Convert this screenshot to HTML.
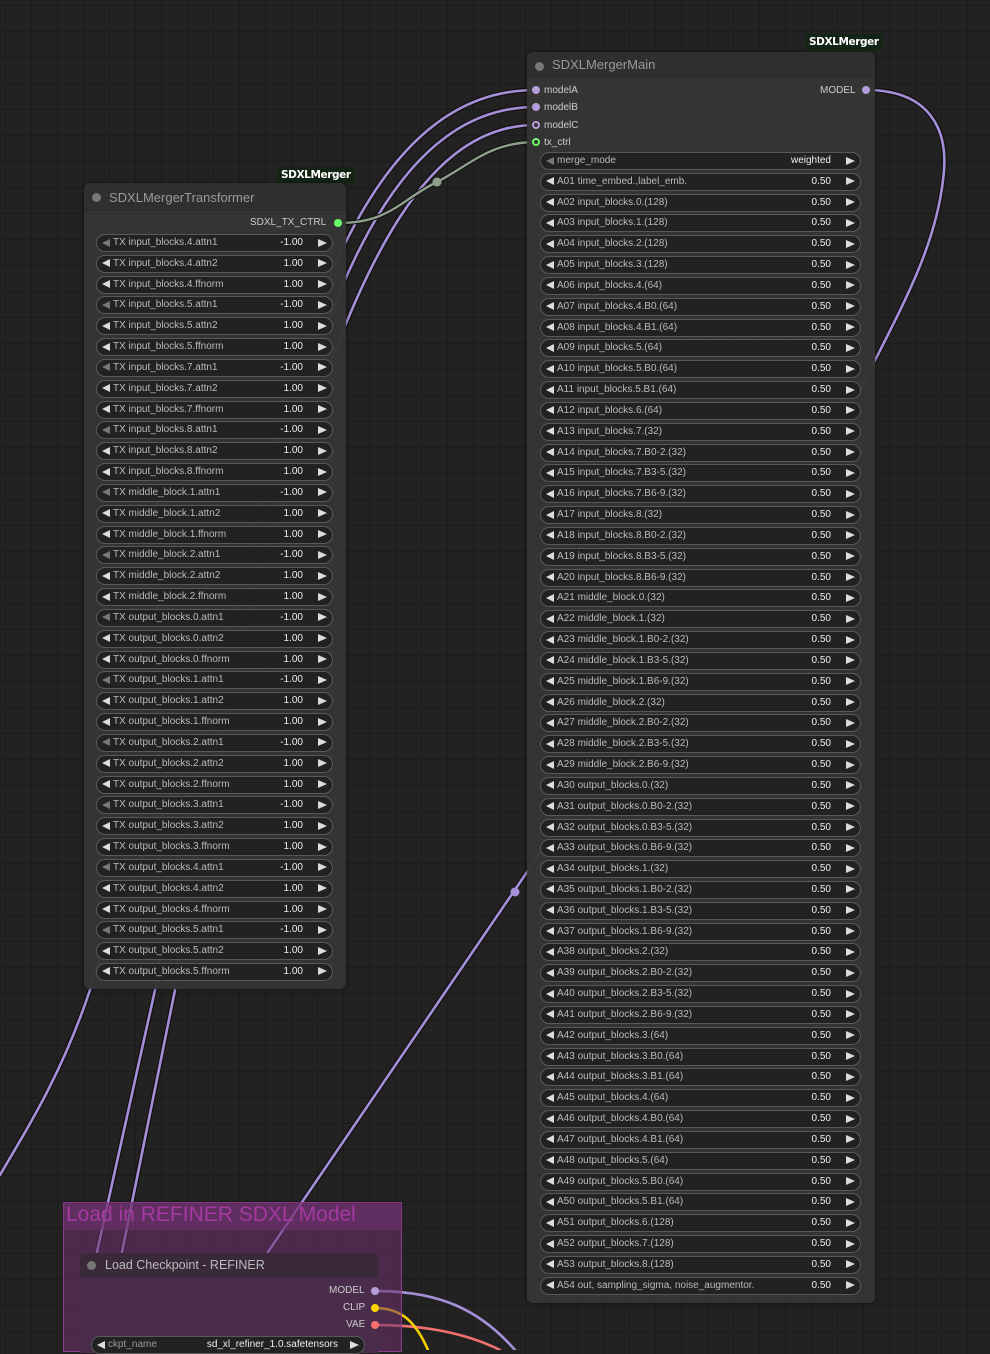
<!DOCTYPE html>
<html><head><meta charset="utf-8"><style>
*{box-sizing:border-box;margin:0;padding:0}
body{width:990px;height:1350px;overflow:hidden;position:relative;font-family:"Liberation Sans",Arial,sans-serif;
background-color:#222;
background-image:linear-gradient(#1b1b1b 1px,transparent 1px),linear-gradient(90deg,#1b1b1b 1px,transparent 1px);
background-size:26px 26px,26px 26px;background-position:0 5px,5px 0}
.abs{position:absolute}
.node{position:absolute;background:rgba(53,53,53,0.97);border-radius:6px;box-shadow:0 0 4px rgba(0,0,0,.5)}
.title{height:28px;background:#2f2f2f;border-radius:6px 6px 0 0;color:#9a9a9a;font-size:13px;line-height:29px;padding-left:25px;position:relative;border-bottom:1px solid #2a2a2a}
.title:before{content:"";position:absolute;left:8px;top:10px;width:9px;height:9px;border-radius:50%;background:#777}
.badge{position:absolute;background:#142414;color:#fff;font-weight:bold;font-size:10.5px;padding:2px 4px;border-radius:4px;font-family:"DejaVu Sans","Liberation Sans",sans-serif;letter-spacing:-0.4px}
.list{position:absolute;display:flex;flex-direction:column}
.w{height:18px;margin-bottom:2.83px;background:#222;border:1px solid #595959;border-radius:9px;position:relative;font-size:10px;color:#bbb;line-height:16px;padding-left:16px;white-space:nowrap}
.w:before{content:"";position:absolute;left:5px;top:3.5px;border-right:8px solid #ddd;border-top:4.5px solid transparent;border-bottom:4.5px solid transparent}
.w:after{content:"";position:absolute;right:5px;top:3.5px;border-left:9px solid #ddd;border-top:4.5px solid transparent;border-bottom:4.5px solid transparent}
.w.g:before{border-right-color:#777}
.w b{position:absolute;right:29px;font-weight:normal;color:#eee}
.sl{position:absolute;font-size:10px;color:#bbb}
.dot{position:absolute;width:8px;height:8px;border-radius:50%}
</style></head><body>
<svg class="abs" style="left:0;top:0" width="990" height="1350">
<g fill="none" stroke-linecap="round">
<g stroke="#111" stroke-width="5">
<path d="M536,90 C420,90 330,200 260,500 S165,900 155,990 L97,1252"/>
<path d="M536,107 C420,107 340,230 275,500 S182,900 175,990 L122,1252"/>
<path d="M536,125 C430,125 360,250 285,500 S110,900 90,990 C60,1080 20,1140 0,1175"/>
<path d="M268,1252 L540,853"/>
<path d="M866,90 C930,90 950,130 943,180 C935,250 900,310 860,390"/>
</g>
<g stroke="#a58fd8" stroke-width="2.6">
<path d="M536,90 C420,90 330,200 260,500 S165,900 155,990 L97,1252"/>
<path d="M536,107 C420,107 340,230 275,500 S182,900 175,990 L122,1252"/>
<path d="M536,125 C430,125 360,250 285,500 S110,900 90,990 C60,1080 20,1140 0,1175"/>
<path d="M268,1252 L540,853"/>
<path d="M866,90 C930,90 950,130 943,180 C935,250 900,310 860,390"/>
<path d="M375,1291 C440,1291 480,1310 515,1350"/>
</g>
<path d="M338,223 C390,223 400,200 437,182 C470,165 490,142 536,142" stroke="#111" stroke-width="4.5"/>
<path d="M338,223 C390,223 400,200 437,182 C470,165 490,142 536,142" stroke="#8e9f8c" stroke-width="2.4"/>
<path d="M375,1325 C430,1325 470,1335 500,1350" stroke="#f07070" stroke-width="2.6"/>
<path d="M375,1308 C400,1308 415,1320 428,1350" stroke="#f5d000" stroke-width="2.6"/>
</g>
<circle cx="437" cy="182" r="4.5" fill="#8e9f8c"/>
<circle cx="515" cy="892" r="4.5" fill="#a58fd8"/>
</svg>

<!-- group -->
<div class="abs" style="left:63px;top:1202px;width:339px;height:150px;background:rgba(110,50,110,0.55);border:1px solid #8a3e8a"></div>
<div class="abs" style="left:63px;top:1202px;width:339px;height:28px;background:rgba(120,50,120,0.5)"></div>
<div class="abs" style="left:66px;top:1201px;font-size:21px;color:#a43aa0;line-height:28px">Load in REFINER SDXL Model</div>
<div class="abs" style="left:80px;top:1253px;width:298px;height:100px;background:#4a2d4a;border-radius:6px 6px 0 0">
  <div style="height:25px;background:#392939;border-radius:6px 6px 0 0;color:#bbb;font-size:12.5px;line-height:25px;padding-left:25px;position:relative"><span style="position:absolute;left:7px;top:8px;width:9px;height:9px;border-radius:50%;background:#777"></span>Load Checkpoint - REFINER</div>
</div>
<div class="sl" style="left:329px;top:1285px;color:#ccc">MODEL</div>
<div class="sl" style="left:343px;top:1302px;color:#ccc">CLIP</div>
<div class="sl" style="left:346px;top:1319px;color:#ccc">VAE</div>
<div class="dot" style="left:371px;top:1287px;background:#b39ddb"></div>
<div class="dot" style="left:371px;top:1304px;background:#ffd500"></div>
<div class="dot" style="left:371px;top:1321px;background:#ff6e6e"></div>
<div class="w" style="position:absolute;left:91px;top:1336px;width:274px;color:#999">ckpt_name<b style="color:#eee;right:26px">sd_xl_refiner_1.0.safetensors</b></div>

<!-- left node -->
<div class="badge" style="left:277px;top:167px">SDXLMerger</div>
<div class="node" style="left:84px;top:183px;width:262px;height:806px">
  <div class="title">SDXLMergerTransformer</div>
</div>
<div class="sl" style="left:250px;top:217px;color:#ccc">SDXL_TX_CTRL</div>
<div class="dot" style="left:334px;top:219px;background:#6f6;"></div>
<div class="list" style="left:96px;top:234px;width:237px">
<div class="w g">TX input_blocks.4.attn1<b>-1.00</b></div>
<div class="w">TX input_blocks.4.attn2<b>1.00</b></div>
<div class="w">TX input_blocks.4.ffnorm<b>1.00</b></div>
<div class="w g">TX input_blocks.5.attn1<b>-1.00</b></div>
<div class="w">TX input_blocks.5.attn2<b>1.00</b></div>
<div class="w">TX input_blocks.5.ffnorm<b>1.00</b></div>
<div class="w g">TX input_blocks.7.attn1<b>-1.00</b></div>
<div class="w">TX input_blocks.7.attn2<b>1.00</b></div>
<div class="w">TX input_blocks.7.ffnorm<b>1.00</b></div>
<div class="w g">TX input_blocks.8.attn1<b>-1.00</b></div>
<div class="w">TX input_blocks.8.attn2<b>1.00</b></div>
<div class="w">TX input_blocks.8.ffnorm<b>1.00</b></div>
<div class="w g">TX middle_block.1.attn1<b>-1.00</b></div>
<div class="w">TX middle_block.1.attn2<b>1.00</b></div>
<div class="w">TX middle_block.1.ffnorm<b>1.00</b></div>
<div class="w g">TX middle_block.2.attn1<b>-1.00</b></div>
<div class="w">TX middle_block.2.attn2<b>1.00</b></div>
<div class="w">TX middle_block.2.ffnorm<b>1.00</b></div>
<div class="w g">TX output_blocks.0.attn1<b>-1.00</b></div>
<div class="w">TX output_blocks.0.attn2<b>1.00</b></div>
<div class="w">TX output_blocks.0.ffnorm<b>1.00</b></div>
<div class="w g">TX output_blocks.1.attn1<b>-1.00</b></div>
<div class="w">TX output_blocks.1.attn2<b>1.00</b></div>
<div class="w">TX output_blocks.1.ffnorm<b>1.00</b></div>
<div class="w g">TX output_blocks.2.attn1<b>-1.00</b></div>
<div class="w">TX output_blocks.2.attn2<b>1.00</b></div>
<div class="w">TX output_blocks.2.ffnorm<b>1.00</b></div>
<div class="w g">TX output_blocks.3.attn1<b>-1.00</b></div>
<div class="w">TX output_blocks.3.attn2<b>1.00</b></div>
<div class="w">TX output_blocks.3.ffnorm<b>1.00</b></div>
<div class="w g">TX output_blocks.4.attn1<b>-1.00</b></div>
<div class="w">TX output_blocks.4.attn2<b>1.00</b></div>
<div class="w">TX output_blocks.4.ffnorm<b>1.00</b></div>
<div class="w g">TX output_blocks.5.attn1<b>-1.00</b></div>
<div class="w">TX output_blocks.5.attn2<b>1.00</b></div>
<div class="w">TX output_blocks.5.ffnorm<b>1.00</b></div>
</div>

<!-- right node -->
<div class="badge" style="left:805px;top:34px">SDXLMerger</div>
<div class="node" style="left:527px;top:52px;width:348px;height:1251px">
  <div class="title" style="height:25px;line-height:26px">SDXLMergerMain</div>
</div>
<div class="sl" style="left:544px;top:85px;color:#ccc">modelA</div>
<div class="sl" style="left:544px;top:102px;color:#ccc">modelB</div>
<div class="sl" style="left:544px;top:120px;color:#ccc">modelC</div>
<div class="sl" style="left:544px;top:137px;color:#ccc">tx_ctrl</div>
<div class="sl" style="left:820px;top:85px;color:#ccc">MODEL</div>
<div class="dot" style="left:532px;top:86px;background:#b39ddb"></div>
<div class="dot" style="left:532px;top:103px;background:#b39ddb"></div>
<div class="dot" style="left:532px;top:121px;border:2px solid #b39ddb;background:#333"></div>
<div class="dot" style="left:532px;top:138px;border:2px solid #6f6;background:#333"></div>
<div class="dot" style="left:862px;top:86px;background:#b39ddb"></div>
<div class="list" style="left:540px;top:152px;width:321px">
<div class="w g">merge_mode<b>weighted</b></div>
<div class="w">A01 time_embed.,label_emb.<b>0.50</b></div>
<div class="w">A02 input_blocks.0.(128)<b>0.50</b></div>
<div class="w">A03 input_blocks.1.(128)<b>0.50</b></div>
<div class="w">A04 input_blocks.2.(128)<b>0.50</b></div>
<div class="w">A05 input_blocks.3.(128)<b>0.50</b></div>
<div class="w">A06 input_blocks.4.(64)<b>0.50</b></div>
<div class="w">A07 input_blocks.4.B0.(64)<b>0.50</b></div>
<div class="w">A08 input_blocks.4.B1.(64)<b>0.50</b></div>
<div class="w">A09 input_blocks.5.(64)<b>0.50</b></div>
<div class="w">A10 input_blocks.5.B0.(64)<b>0.50</b></div>
<div class="w">A11 input_blocks.5.B1.(64)<b>0.50</b></div>
<div class="w">A12 input_blocks.6.(64)<b>0.50</b></div>
<div class="w">A13 input_blocks.7.(32)<b>0.50</b></div>
<div class="w">A14 input_blocks.7.B0-2.(32)<b>0.50</b></div>
<div class="w">A15 input_blocks.7.B3-5.(32)<b>0.50</b></div>
<div class="w">A16 input_blocks.7.B6-9.(32)<b>0.50</b></div>
<div class="w">A17 input_blocks.8.(32)<b>0.50</b></div>
<div class="w">A18 input_blocks.8.B0-2.(32)<b>0.50</b></div>
<div class="w">A19 input_blocks.8.B3-5.(32)<b>0.50</b></div>
<div class="w">A20 input_blocks.8.B6-9.(32)<b>0.50</b></div>
<div class="w">A21 middle_block.0.(32)<b>0.50</b></div>
<div class="w">A22 middle_block.1.(32)<b>0.50</b></div>
<div class="w">A23 middle_block.1.B0-2.(32)<b>0.50</b></div>
<div class="w">A24 middle_block.1.B3-5.(32)<b>0.50</b></div>
<div class="w">A25 middle_block.1.B6-9.(32)<b>0.50</b></div>
<div class="w">A26 middle_block.2.(32)<b>0.50</b></div>
<div class="w">A27 middle_block.2.B0-2.(32)<b>0.50</b></div>
<div class="w">A28 middle_block.2.B3-5.(32)<b>0.50</b></div>
<div class="w">A29 middle_block.2.B6-9.(32)<b>0.50</b></div>
<div class="w">A30 output_blocks.0.(32)<b>0.50</b></div>
<div class="w">A31 output_blocks.0.B0-2.(32)<b>0.50</b></div>
<div class="w">A32 output_blocks.0.B3-5.(32)<b>0.50</b></div>
<div class="w">A33 output_blocks.0.B6-9.(32)<b>0.50</b></div>
<div class="w">A34 output_blocks.1.(32)<b>0.50</b></div>
<div class="w">A35 output_blocks.1.B0-2.(32)<b>0.50</b></div>
<div class="w">A36 output_blocks.1.B3-5.(32)<b>0.50</b></div>
<div class="w">A37 output_blocks.1.B6-9.(32)<b>0.50</b></div>
<div class="w">A38 output_blocks.2.(32)<b>0.50</b></div>
<div class="w">A39 output_blocks.2.B0-2.(32)<b>0.50</b></div>
<div class="w">A40 output_blocks.2.B3-5.(32)<b>0.50</b></div>
<div class="w">A41 output_blocks.2.B6-9.(32)<b>0.50</b></div>
<div class="w">A42 output_blocks.3.(64)<b>0.50</b></div>
<div class="w">A43 output_blocks.3.B0.(64)<b>0.50</b></div>
<div class="w">A44 output_blocks.3.B1.(64)<b>0.50</b></div>
<div class="w">A45 output_blocks.4.(64)<b>0.50</b></div>
<div class="w">A46 output_blocks.4.B0.(64)<b>0.50</b></div>
<div class="w">A47 output_blocks.4.B1.(64)<b>0.50</b></div>
<div class="w">A48 output_blocks.5.(64)<b>0.50</b></div>
<div class="w">A49 output_blocks.5.B0.(64)<b>0.50</b></div>
<div class="w">A50 output_blocks.5.B1.(64)<b>0.50</b></div>
<div class="w">A51 output_blocks.6.(128)<b>0.50</b></div>
<div class="w">A52 output_blocks.7.(128)<b>0.50</b></div>
<div class="w">A53 output_blocks.8.(128)<b>0.50</b></div>
<div class="w">A54 out, sampling_sigma, noise_augmentor.<b>0.50</b></div>
</div>
</body></html>
